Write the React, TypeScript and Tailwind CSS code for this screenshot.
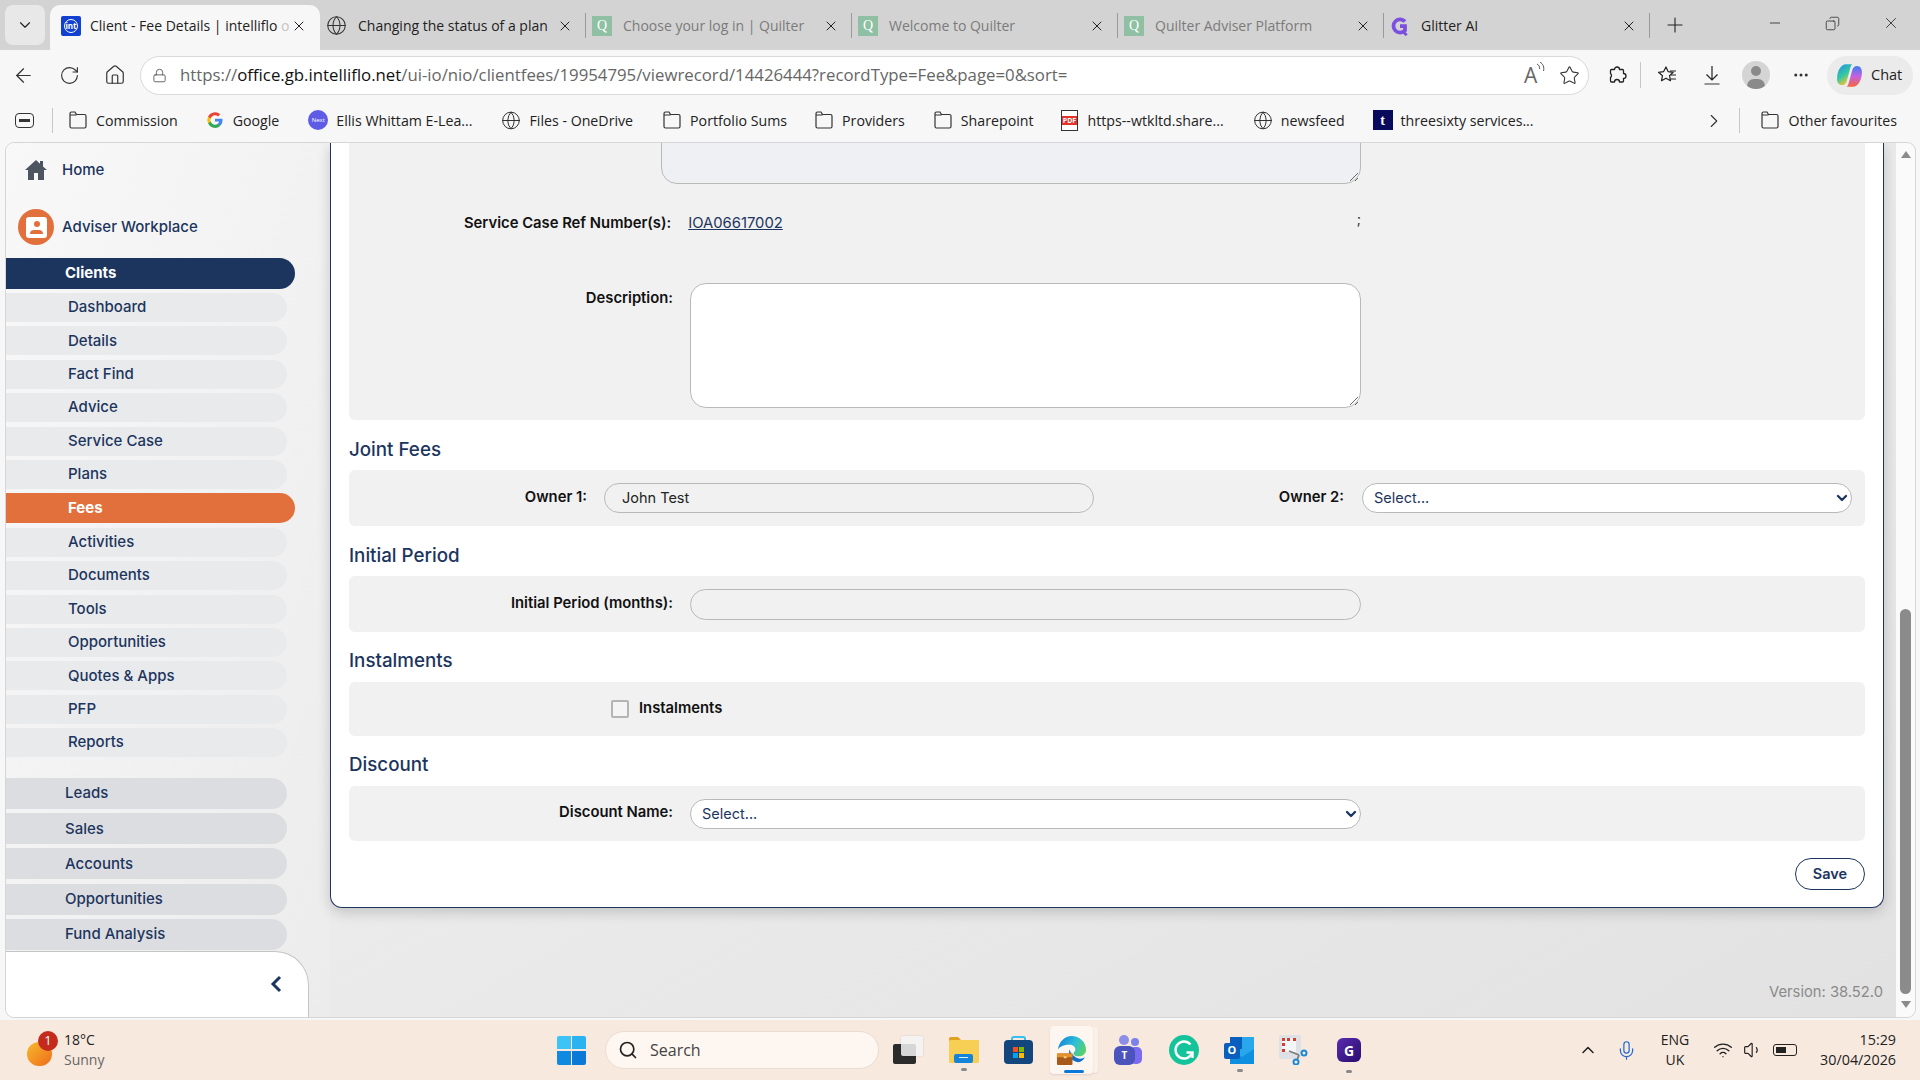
import { ReactNode } from 'react'
import {
  ArrowLeft, ChevronDown, ChevronRight, ChevronUp, Copy, Globe, Home, Lock, Mic, Minus, MoreHorizontal,
  Plus, RotateCw, Search, Star, Volume1, Wifi, X,
} from 'lucide-react'

const sans = 'font-["Open_Sans","Noto_Sans",sans-serif]'

const tabs = [
  { title: 'Changing the status of a plan', icon: 'globe', dim: false },
  { title: 'Choose your log in | Quilter', icon: 'q', dim: true },
  { title: 'Welcome to Quilter', icon: 'q', dim: true },
  { title: 'Quilter Adviser Platform', icon: 'q', dim: true },
  { title: 'Glitter AI', icon: 'g', dim: false },
]

const bookmarks = [
  { label: 'Commission', icon: 'folder', cls: 'ml-[15px]' },
  { label: 'Google', icon: 'google', cls: 'ml-[27px]' },
  { label: 'Ellis Whittam E-Lea...', icon: 'ellis', cls: 'ml-[29px]' },
  { label: 'Files - OneDrive', icon: 'globe', cls: 'ml-[29px]' },
  { label: 'Portfolio Sums', icon: 'folder', cls: 'ml-[29px]' },
  { label: 'Providers', icon: 'folder', cls: 'ml-[27px]' },
  { label: 'Sharepoint', icon: 'folder', cls: 'ml-[28px]' },
  { label: 'https--wtkltd.share...', icon: 'pdf', cls: 'ml-[26px]' },
  { label: 'newsfeed', icon: 'globe', cls: 'ml-[29px]' },
  { label: 'threesixty services...', icon: 't', cls: 'ml-[28px]' },
]

const clientItems = ['Dashboard', 'Details', 'Fact Find', 'Advice', 'Service Case', 'Plans', 'Fees', 'Activities', 'Documents', 'Tools', 'Opportunities', 'Quotes & Apps', 'PFP', 'Reports']
const lowerItems = ['Leads', 'Sales', 'Accounts', 'Opportunities', 'Fund Analysis']

function QIcon() {
  return <span className='flex h-[20px] w-[20px] shrink-0 items-center justify-center bg-[#8fc0a3] font-["Liberation_Serif",serif] text-[14px] text-white'>Q</span>
}

function GlitterG() {
  return (
    <svg width="20" height="20" viewBox="0 0 24 24" fill="none" className="shrink-0">
      <path d="M18 6.500A8 8 0 1 0 18 17.500V12h-6" stroke="#7c4fe0" strokeWidth="4.500" />
      <path d="M15 18l5 5" stroke="#7c4fe0" strokeWidth="3.500" />
    </svg>
  )
}

function GoogleIcon() {
  return (
    <svg width="18" height="18" viewBox="0 0 24 24">
      <path d="M22 12.200c0-.7-.1-1.400-.2-2H12v3.900h5.600a4.800 4.800 0 0 1-2.100 3.100v2.600h3.300c2-1.800 3.200-4.500 3.200-7.600z" fill="#4285f4" />
      <path d="M12 22.500c2.800 0 5.100-.9 6.800-2.500l-3.300-2.600c-.9.6-2.100 1-3.500 1-2.700 0-5-1.800-5.800-4.300H2.800v2.700A10.300 10.300 0 0 0 12 22.500z" fill="#34a853" />
      <path d="M6.200 14.100a6.200 6.200 0 0 1 0-4V7.400H2.800a10.300 10.300 0 0 0 0 9.400z" fill="#fbbc05" />
      <path d="M12 5.800c1.500 0 2.900.5 4 1.600l3-3A10.300 10.300 0 0 0 2.800 7.400l3.400 2.700C7 7.600 9.300 5.800 12 5.800z" fill="#ea4335" />
    </svg>
  )
}

function FolderIcon() {
  return (
    <svg width="20" height="20" viewBox="0 0 20 20" fill="none" stroke="#333" strokeWidth="1.200" className="shrink-0">
      <path d="M2 5V3.500A1.500 1.500 0 0 1 3.500 2H7l1.500 2.500H16.500A1.500 1.500 0 0 1 18 6v10.500a1.500 1.500 0 0 1-1.500 1.500h-13A1.500 1.500 0 0 1 2 16.500V5h6.500" />
    </svg>
  )
}

function BookmarkIcon({ kind }: { kind: string }) {
  if (kind === 'folder') return <FolderIcon />
  if (kind === 'globe') return <Globe size={21} strokeWidth={1.200} className="text-[#333]" />
  if (kind === 'google') return <GoogleIcon />
  if (kind === 'ellis') return <span className="flex h-[20px] w-[20px] items-center justify-center rounded-full bg-[#5e5ce6] text-[6px] text-white">Next</span>
  if (kind === 't') return <span className='flex h-[20px] w-[20px] items-center justify-center bg-[#0a0a5c] font-["Liberation_Serif",serif] text-[14px] font-bold text-white'>t</span>
  return (
    <span className="relative flex h-[21px] w-[17px] flex-col justify-center border border-[#333] bg-white">
      <span className="bg-[#e2342b] text-center text-[7px] font-bold leading-[9px] text-white">PDF</span>
    </span>
  )
}

function Tab({ title, icon, dim }: { title: string; icon: string; dim: boolean }) {
  return (
    <div className="flex h-[45px] w-[266px] shrink-0 items-center pb-[4px] pl-[6px]">
      {icon === 'globe' && <Globe size={21} strokeWidth={1.200} className="shrink-0 text-[#333]" />}
      {icon === 'q' && <QIcon />}
      {icon === 'g' && <GlitterG />}
      <span className={`ml-[11px] flex-1 whitespace-nowrap text-[14px] ${dim ? 'text-[#7b7b7b]' : 'text-[#222]'}`}>{title}</span>
      <X size={16} strokeWidth={1.500} className="shrink-0 text-[#222]" />
      <span className="ml-[12px] h-[25px] w-px shrink-0 bg-[#9a9a9a]" />
    </div>
  )
}

function TabStrip() {
  return (
    <div className="flex h-[50px] items-end bg-[#d3d3d3] pl-[5px]">
      <div className="mb-[5px] flex h-[40px] w-[40px] items-center justify-center rounded-[8px] bg-[#e8e8e8]">
        <ChevronDown size={18} strokeWidth={1.500} className="text-[#222]" />
      </div>
      <div className="ml-[5px] flex h-[45px] w-[270px] shrink-0 items-center rounded-t-[10px] bg-[#f7f7f7] pb-[4px] pl-[11px]">
        <span className="flex h-[20px] w-[20px] items-center justify-center rounded-[2px] bg-[#1240d0]">
          <span className="flex h-[14px] w-[14px] items-center justify-center rounded-full border border-white text-[8px] font-bold text-white">int</span>
        </span>
        <span className="ml-[9px] w-[201px] whitespace-nowrap text-[14px] text-[#222]">Client - Fee Details | intelliflo <span className="text-[#c4c4c4]">o</span></span>
        <X size={16} strokeWidth={1.500} className="text-[#222]" />
      </div>
      <div className="flex">
        {tabs.map(t => <Tab key={t.title} {...t} />)}
      </div>
      <div className="mb-[5px] ml-[13px] flex h-[40px] items-center">
        <Plus size={24} strokeWidth={1.100} className="text-[#222]" />
      </div>
      <div className="mb-[7px] ml-auto flex h-[40px] items-center gap-[42px] pr-[20px] text-[#222]">
        <Minus size={16} strokeWidth={1.200} />
        <Copy size={15} strokeWidth={1.200} className="-scale-x-100" />
        <X size={18} strokeWidth={1.100} />
      </div>
    </div>
  )
}

function ReadAloud() {
  return (
    <span className="relative flex w-[20px] items-center text-[21px] leading-none text-[#666]">
      A
      <svg className="absolute right-[-2px] top-[-3px]" width="10" height="12" viewBox="0 0 10 12" fill="none" stroke="#555" strokeWidth="1">
        <path d="M1 2c2 1 3 3 2.500 5" />
        <path d="M4 0c3 2 4.500 5 3.500 9" />
      </svg>
    </span>
  )
}

function CopilotIcon() {
  return (
    <svg width="27" height="27" viewBox="0 0 24 24" className="shrink-0">
      <defs>
        <linearGradient id="cpA" x1="0" y1="0" x2="0.500" y2="1">
          <stop offset="0" stopColor="#1f8fe8" />
          <stop offset="0.600" stopColor="#36c9a0" />
          <stop offset="1" stopColor="#f7c52c" />
        </linearGradient>
        <linearGradient id="cpB" x1="0.500" y1="0" x2="0.500" y2="1">
          <stop offset="0" stopColor="#3a7ff0" />
          <stop offset="0.500" stopColor="#c560e0" />
          <stop offset="1" stopColor="#f7653c" />
        </linearGradient>
      </defs>
      <path d="M9 2h5.500c-1 1-1.500 2-2 4l-3 11c-.6 2-2 3.500-4 3.500-3.500 0-5-3-4.500-7C1.500 8 4 2 9 2z" fill="url(#cpA)" />
      <path d="M15 22H9.500c1-1 1.500-2 2-4l3-11c.6-2 2-3.500 4-3.500 3.500 0 5 3 4.500 7C22.500 16 20 22 15 22z" fill="url(#cpB)" />
    </svg>
  )
}

function ExtensionIcon() {
  return (
    <svg width="20" height="20" viewBox="0 0 20 20" fill="none" stroke="#222" strokeWidth="1.300" strokeLinejoin="round" className="ml-[18px] shrink-0">
      <path d="M7.500 4.500a2.500 2.500 0 0 1 5 0h3a1 1 0 0 1 1 1v3a2.500 2.500 0 0 1 0 5v2.500a1 1 0 0 1-1 1h-3a2.500 2.500 0 0 0-5 0h-3a1 1 0 0 1-1-1v-3.500a2.500 2.500 0 0 0 0-4V5.500a1 1 0 0 1 1-1z" />
    </svg>
  )
}

function FavouritesIcon() {
  return (
    <svg width="20" height="20" viewBox="0 0 20 20" fill="none" stroke="#222" strokeWidth="1.200" strokeLinejoin="round" className="ml-[16px] shrink-0">
      <path d="M9 2l2.200 4.700 5 .6-3.700 3.400 1 5-4.500-2.500-4.500 2.500 1-5L1.500 7.300l5-.6z" />
      <path d="M13 6h6M14 10h5M13.500 14H19" />
    </svg>
  )
}

function DownloadIcon() {
  return (
    <svg width="16" height="20" viewBox="0 0 16 20" fill="none" stroke="#222" strokeWidth="1.200" className="ml-[27px] shrink-0">
      <path d="M8 1v14M2.500 9.500L8 15l5.500-5.500" />
      <path d="M0.500 19h15" stroke="#555" />
    </svg>
  )
}

function Toolbar() {
  return (
    <div className="flex h-[52px] items-center bg-[#f7f7f7] pb-[2px] text-[#333]">
      <ArrowLeft size={23} strokeWidth={1.300} className="ml-[12px] shrink-0" />
      <RotateCw size={21} strokeWidth={1.300} className="ml-[24px] shrink-0" />
      <Home size={22} strokeWidth={1.300} className="ml-[24px] shrink-0" />
      <div className="ml-[14px] flex h-[39px] w-[1449px] shrink-0 items-center rounded-full border border-[#d9d9d9] bg-white pl-[11px] pr-[8px]">
        <Lock size={15} strokeWidth={1.400} className="shrink-0 text-[#555]" />
        <span className="ml-[13px] flex-1 whitespace-nowrap text-[16.800px] text-[#666]">
          https://<span className="text-[#111]">office.gb.intelliflo.net</span>/ui-io/nio/clientfees/19954795/viewrecord/14426444?recordType=Fee&amp;page=0&amp;sort=
        </span>
        <ReadAloud />
        <Star size={21} strokeWidth={1.200} className="ml-[15px] shrink-0 text-[#333]" />
      </div>
      <ExtensionIcon />
      <span className="ml-[13px] h-[26px] w-px shrink-0 bg-[#c6c6c6]" />
      <FavouritesIcon />
      <DownloadIcon />
      <span className="relative ml-[22px] h-[28px] w-[28px] shrink-0 overflow-hidden rounded-full bg-[#d4d4d4]">
        <span className="absolute left-[9px] top-[5px] h-[10px] w-[10px] rounded-full bg-[#8a8a8a]" />
        <span className="absolute left-[5px] top-[18px] h-[14px] w-[18px] rounded-full bg-[#8a8a8a]" />
      </span>
      <MoreHorizontal size={18} strokeWidth={2} className="ml-[22px] shrink-0" />
      <div className="ml-[17px] flex h-[39px] w-[86px] shrink-0 items-center rounded-full bg-[#ebebeb] pl-[9px]">
        <CopilotIcon />
        <span className="ml-[8px] text-[14.500px] text-[#222]">Chat</span>
      </div>
    </div>
  )
}

function BookmarksBar() {
  return (
    <div className="flex h-[41px] items-center bg-[#f7f7f7] pb-[4px] text-[14.200px] text-[#222]">
      <span className="ml-[15px] flex h-[15px] w-[19px] items-center justify-center rounded-[4px] border-[1.500px] border-[#333]">
        <span className="h-[3px] w-[11px] bg-[#333]" />
      </span>
      <span className="ml-[18px] h-[25px] w-px bg-[#c6c6c6]" />
      {bookmarks.map(b => (
        <div key={b.label} className={`flex items-center gap-[8px] whitespace-nowrap ${b.cls}`}>
          <span className="flex w-[20px] justify-center"><BookmarkIcon kind={b.icon} /></span>
          {b.label}
        </div>
      ))}
      <ChevronRight size={22} strokeWidth={1.200} className="ml-auto text-[#333]" />
      <span className="ml-[14px] h-[25px] w-px bg-[#c6c6c6]" />
      <div className="ml-[20px] mr-[23px] flex items-center gap-[9px] whitespace-nowrap">
        <FolderIcon />
        Other favourites
      </div>
    </div>
  )
}

function Sidebar() {
  return (
    <aside className='flex w-[324px] shrink-0 flex-col bg-gradient-to-br from-[#f8f8f8] to-[#ececec] font-["Inter",sans-serif] text-[15px] font-medium text-[#1c355e]'>
      <div className="flex h-[54px] items-center pl-[19px]">
        <svg width="22" height="20" viewBox="0 0 22 20" fill="#4d5660">
          <path d="M11 0L0 10h3v10h6v-7h4v7h6V10h3l-4-3.600V1h-3v2.700z" />
        </svg>
        <span className="ml-[15px]">Home</span>
      </div>
      <div className="mt-[12px] flex items-center pl-[12px]">
        <span className="flex h-[36px] w-[36px] items-center justify-center rounded-full bg-[#e2703c]">
          <span className="relative h-[21px] w-[21px] rounded-[3px] bg-white">
            <span className="absolute left-[8px] top-[4px] h-[6px] w-[6px] rounded-full bg-[#e2703c]" />
            <span className="absolute bottom-[4px] left-[4px] h-[4px] w-[13px] rounded-t-[4px] bg-[#e2703c]" />
          </span>
        </span>
        <span className="ml-[8px]">Adviser Workplace</span>
      </div>
      <div className="mr-[35px] mt-[13px] flex h-[31px] items-center rounded-r-full bg-[#1c355e] pl-[59px] font-bold text-white">Clients</div>
      <div className="mt-[4px] flex flex-col gap-[4.400px]">
        {clientItems.map(item =>
          item === 'Fees' ? (
            <div key={item} className="mr-[35px] flex h-[30px] items-center rounded-r-full bg-[#e2703c] pl-[62px] font-bold text-white">{item}</div>
          ) : (
            <div key={item} className="mr-[43px] flex h-[29px] items-center rounded-r-full bg-[#e9eaec] pl-[62px]">{item}</div>
          ),
        )}
      </div>
      <div className="mt-[21px] flex flex-col gap-[4.200px]">
        {lowerItems.map(item => (
          <div key={item} className="mr-[43px] flex h-[31px] items-center rounded-r-full bg-[#dcdde0] pl-[59px]">{item}</div>
        ))}
      </div>
      <div className="mr-[21px] mt-[1px] flex flex-1 items-center justify-end rounded-bl-[8px] rounded-tr-[34px] border-r border-t border-[#c4c4c4] bg-white pr-[26px]">
        <svg width="12" height="18" viewBox="0 0 12 18" fill="none" stroke="#1c355e" strokeWidth="3">
          <path d="M10 2L3 9l7 7" />
        </svg>
      </div>
    </aside>
  )
}

function Label({ children, cls }: { children: ReactNode; cls: string }) {
  return <span className={`shrink-0 text-right text-[14.800px] font-semibold text-[#111] ${cls}`}>{children}</span>
}

function Resize() {
  return (
    <svg className="absolute bottom-[1px] right-[1px]" width="10" height="10" viewBox="0 0 10 10" stroke="#666" strokeWidth="1">
      <path d="M1 9l8-8M6 9l3-3" />
    </svg>
  )
}

function SelectBox({ cls }: { cls: string }) {
  return (
    <div className={`flex h-[30px] items-center justify-between rounded-full border border-[#b9b9b9] bg-white pl-[11px] pr-[1px] text-[14.500px] text-[#1c355e] ${cls}`}>
      Select...
      <ChevronDown size={16} strokeWidth={3.500} className="text-[#1c355e]" />
    </div>
  )
}

function Heading({ children, cls }: { children: ReactNode; cls: string }) {
  return <h3 className={`text-[18.750px] font-medium leading-[24px] text-[#1c355e] ${cls}`}>{children}</h3>
}

function Card() {
  return (
    <div className="flex h-[765px] w-[1554px] shrink-0 flex-col overflow-hidden rounded-b-[12px] border border-t-0 border-[#1c355e] bg-white pl-[18px] pr-[18px] shadow-[0_4px_14px_rgba(0,0,0,0.18)]">
      <div className="relative h-[277px] shrink-0 overflow-hidden rounded-b-[6px] bg-[#f1f1f1]">
        <div className="ml-[312px] mt-[-30px] w-[700px] rounded-[16px] border border-[#b9b9b9] bg-[#eff0f4]">
          <div className="relative h-[69px]"><Resize /></div>
        </div>
        <div className="mt-[30px] flex h-[18px] items-center">
          <Label cls="ml-[115px]">Service Case Ref Number(s):</Label>
          <a className="ml-[17px] text-[14.800px] text-[#1c355e] underline">IOA06617002</a>
          <span className="ml-auto mr-[504px] mt-[-9px] text-[14px] leading-none text-[#333]">;</span>
        </div>
        <div className="ml-[10px] mt-[51px] flex">
          <Label cls="mt-[4px] w-[314px]">Description:</Label>
          <div className="relative ml-[17px] h-[125px] w-[671px] rounded-[16px] border border-[#b9b9b9] bg-white"><Resize /></div>
        </div>
      </div>

      <Heading cls="mt-[18px]">Joint Fees</Heading>
      <div className="mt-[8px] flex h-[56px] shrink-0 items-center rounded-[6px] bg-[#f1f1f1]">
        <Label cls="mt-[-2px] w-[238px]">Owner 1:</Label>
        <div className="ml-[17px] flex h-[30px] w-[490px] items-center rounded-full border border-[#b9b9b9] pl-[17px] text-[14.500px] text-[#222]">John Test</div>
        <Label cls="ml-auto mt-[-2px]">Owner 2:</Label>
        <SelectBox cls="ml-[18px] mr-[13px] w-[490px]" />
      </div>

      <Heading cls="mt-[18px]">Initial Period</Heading>
      <div className="mt-[8px] flex h-[56px] shrink-0 items-center rounded-[6px] bg-[#f1f1f1]">
        <Label cls="mt-[-2px] w-[324px]">Initial Period (months):</Label>
        <div className="ml-[17px] h-[31px] w-[671px] rounded-full border border-[#b9b9b9]" />
      </div>

      <Heading cls="mt-[17px]">Instalments</Heading>
      <div className="mt-[9px] flex h-[54px] shrink-0 items-center rounded-[6px] bg-[#f1f1f1] pl-[262px]">
        <span className="h-[18px] w-[18px] rounded-[2px] border-2 border-[#b4b4b4] bg-[#f4f4f4]" />
        <Label cls="ml-[10px] mt-[-2px]">Instalments</Label>
      </div>

      <Heading cls="mt-[17px]">Discount</Heading>
      <div className="mt-[9px] flex h-[55px] shrink-0 items-center rounded-[6px] bg-[#f1f1f1]">
        <Label cls="mt-[-3px] w-[324px]">Discount Name:</Label>
        <SelectBox cls="ml-[17px] w-[671px]" />
      </div>

      <div className="mt-[17px] flex justify-end">
        <button className="flex h-[32px] w-[70px] items-center justify-center rounded-full border border-[#1c355e] text-[14.500px] font-semibold text-[#1c355e]">Save</button>
      </div>
    </div>
  )
}

function Scrollbar() {
  return (
    <div className="flex w-[19px] shrink-0 flex-col items-center rounded-tr-[8px] bg-[#fafafa] pt-[8px]">
      <span className="h-0 w-0 border-x-[5px] border-b-[7px] border-x-transparent border-b-[#8b8b8b]" />
      <div className="mt-[451px] h-[385px] w-[11px] rounded-full bg-[#8b8b8b]" />
      <span className="mt-[7px] h-0 w-0 border-x-[5px] border-t-[7px] border-x-transparent border-t-[#8b8b8b]" />
    </div>
  )
}

function Page() {
  return (
    <div className="ml-[6px] mr-[5px] flex h-[874px] overflow-hidden rounded-[8px] bg-[#ececec] shadow-[0_0_0_1px_#d6d6d6]">
      <Sidebar />
      <main className='flex flex-1 flex-col bg-gradient-to-br from-[#f2f2f2] to-[#e2e2e2] font-["Inter",sans-serif]'>
        <Card />
        <div className="mt-[73px] w-[1553px] text-right text-[14.750px] text-[#8a8a8a]">Version: 38.52.0</div>
      </main>
      <Scrollbar />
    </div>
  )
}

function WinLogo() {
  return (
    <span className="grid h-[29px] w-[29px] grid-cols-2 gap-[1.500px]">
      <span className="rounded-tl-[2px] bg-[#3ec3f7]" />
      <span className="rounded-tr-[2px] bg-[#2bb2f0]" />
      <span className="rounded-bl-[2px] bg-[#0f8ae0]" />
      <span className="rounded-br-[2px] bg-[#0a78d6]" />
    </span>
  )
}

function RunDot({ cls }: { cls: string }) {
  return <span className={`absolute bottom-[-8px] h-[3px] w-[6px] rounded-full bg-[#8a8a8a] ${cls}`} />
}

function TaskbarApps() {
  return (
    <div className="ml-[14px] flex items-center">
      {/* task view */}
      <span className="relative h-[28px] w-[30px]">
        <span className="absolute bottom-0 left-0 h-[20px] w-[23px] rounded-[2px] bg-[#2b2b2b]" />
        <span className="absolute right-0 top-0 h-[20px] w-[22px] rounded-[2px] bg-[#f4f4f4]/85 shadow-[0_0_2px_rgba(0,0,0,0.15)]" />
      </span>
      {/* explorer */}
      <span className="relative ml-[26px] h-[26px] w-[30px]">
        <svg width="30" height="26" viewBox="0 0 30 26">
          <path d="M0 2a2 2 0 0 1 2-2h7l3 3h16a2 2 0 0 1 2 2v4H0z" fill="#dfa11e" />
          <rect x="0" y="3" width="30" height="23" rx="1.500" fill="#f8cf55" />
          <rect x="5" y="17" width="19" height="9" rx="2" fill="#1583d8" />
          <rect x="10" y="20" width="9" height="1" fill="#d9efff" />
        </svg>
        <RunDot cls="left-[12px]" />
      </span>
      {/* store */}
      <span className="relative ml-[25px] h-[28px] w-[29px]">
        <span className="absolute left-[7px] top-0 h-[6px] w-[15px] rounded-t-[3px] border-2 border-b-0 border-[#35c0ef]" />
        <span className="absolute inset-x-0 bottom-0 top-[4px] flex items-center justify-center rounded-[4px] bg-[#14467e]">
          <span className="grid grid-cols-2 gap-[1px]">
            <span className="h-[5px] w-[5px] bg-[#f25022]" /><span className="h-[5px] w-[5px] bg-[#7fba00]" />
            <span className="h-[5px] w-[5px] bg-[#00a4ef]" /><span className="h-[5px] w-[5px] bg-[#ffb900]" />
          </span>
        </span>
      </span>
      {/* edge, active */}
      <span className="relative ml-[17px] flex h-[48px] w-[43px] items-center justify-center rounded-[4px] bg-[#fdf6f0] shadow-[0_1px_2px_rgba(0,0,0,0.1)]">
        <svg width="31" height="31" viewBox="0 0 32 32">
          <defs>
            <linearGradient id="edgeTop" x1="0" y1="0.300" x2="1" y2="0.700">
              <stop offset="0" stopColor="#1686d9" />
              <stop offset="0.550" stopColor="#2fc0d8" />
              <stop offset="1" stopColor="#5ad25e" />
            </linearGradient>
          </defs>
          <path d="M2 15C3 7 9 1 16 1c8 0 15 6 15 14 0 4-3 7-7 7-3 0-6-1-6-3 0-1 2-2 2-4 0-3-3-5-6-5C8 10 4 12 2 15z" fill="url(#edgeTop)" />
          <path d="M14 15c-2 5 2 13 9 13 3 0 5-2 7-5-3 2-8 2-11-1-3-2-4-4-5-7z" fill="#1270c8" />
          <rect x="1" y="19" width="16" height="12" rx="1" fill="#a8591a" />
          <rect x="1" y="19" width="16" height="4" fill="#e2932c" />
          <rect x="8" y="22" width="3" height="2" fill="#f8d27a" />
        </svg>
        <span className="absolute bottom-[1px] left-[14px] h-[3px] w-[20px] rounded-full bg-[#0a78d6]" />
      </span>
      <span className="h-[46px] w-[5px] rounded-r-[4px] bg-[#fbf1ea] shadow-[0_1px_2px_rgba(0,0,0,0.08)]" />
      {/* teams */}
      <span className="relative ml-[16px] h-[30px] w-[28px]">
        <span className="absolute right-[3px] top-[3px] h-[8px] w-[8px] rounded-full bg-[#7b83eb]" />
        <span className="absolute left-[5px] top-0 h-[10px] w-[10px] rounded-full bg-[#8b8fe8]" />
        <span className="absolute bottom-[1px] right-0 h-[17px] w-[12px] rounded-[5px] bg-[#7a6cf0]" />
        <span className="absolute bottom-0 left-0 flex h-[19px] w-[21px] items-center justify-center rounded-[6px] bg-[#4b53bc] text-[10px] font-bold text-white">T</span>
      </span>
      {/* grammarly */}
      <svg width="30" height="30" viewBox="0 0 30 30" fill="none" className="ml-[27px]">
        <circle cx="15" cy="15" r="15" fill="#15c39a" />
        <path d="M21.500 9.500A8.500 8.500 0 1 0 23 18" stroke="#fff" strokeWidth="2.400" />
        <path d="M17.500 17.500H23.500V23" stroke="#fff" strokeWidth="2.400" />
      </svg>
      {/* outlook */}
      <span className="relative ml-[25px] h-[27px] w-[30px]">
        <span className="absolute right-0 top-0 grid h-[15px] w-[24px] grid-cols-2 bg-[#0f6cbd]">
          <span className="bg-[#0a5ebd]" /><span className="bg-[#28a8ea]" />
        </span>
        <svg className="absolute bottom-0 right-0" width="24" height="15" viewBox="0 0 24 15">
          <path d="M0 0l24 0v15H0z" fill="#28a8ea" />
          <path d="M0 0l12 8 12-8v15H0z" fill="#0f8fe0" />
        </svg>
        <span className="absolute left-0 top-[6px] flex h-[16px] w-[16px] items-center justify-center rounded-[2px] bg-[#0a5ebd] text-[11px] font-bold text-white">O</span>
        <RunDot cls="left-[13px]" />
      </span>
      {/* snip */}
      <span className="relative ml-[25px] h-[30px] w-[30px]">
        <span className="absolute left-0 top-0 h-[24px] w-[22px] rounded-[2px] bg-[#dde1e6]" />
        <span className="absolute left-[3px] top-[3px] h-[14px] w-[14px] border-l-[3px] border-t-[3px] border-dotted border-[#d83b2d] bg-[#f4f5f7]" />
        <svg className="absolute bottom-0 right-0" width="22" height="22" viewBox="0 0 22 22" fill="none">
          <path d="M2 8l10 4M12 12l-2 5" stroke="#7d7d7d" strokeWidth="1.800" />
          <circle cx="17" cy="10" r="2.500" stroke="#1b8ad6" strokeWidth="2" />
          <circle cx="9" cy="19" r="2.500" stroke="#1b8ad6" strokeWidth="2" />
        </svg>
      </span>
      {/* glitter */}
      <span className="relative ml-[28px] flex h-[24px] w-[24px] items-center justify-center rounded-[6px] bg-gradient-to-br from-[#5a2bb0] to-[#2a0c6e] text-[14px] font-bold text-white">
        G
        <RunDot cls="left-[9px] bottom-[-11px]" />
      </span>
    </div>
  )
}

function Taskbar() {
  return (
    <div className="mt-[3px] flex h-[60px] items-center bg-[#f8e9df] text-[#222]">
      <span className="relative ml-[27px] mt-[7px] h-[24px] w-[25px] rounded-full bg-gradient-to-br from-[#f4b92c] to-[#ee6a1a]">
        <span className="absolute left-[11px] top-[-11px] flex h-[20px] w-[20px] items-center justify-center rounded-full bg-[#c42b1c] text-[13px] text-white">1</span>
      </span>
      <div className="ml-[12px] flex w-[47px] flex-col text-[14px] leading-[20px]">
        <span>18°C</span>
        <span className="text-[#666]">Sunny</span>
      </div>
      <div className="ml-[446px] flex items-center">
        <WinLogo />
        <div className="ml-[19px] flex h-[38px] w-[274px] items-center rounded-full border border-[#ecdcd0] bg-[#fdf6f1] pl-[12px]">
          <Search size={20} strokeWidth={2} className="text-[#222]" />
          <span className="ml-[12px] text-[16px] text-[#444]">Search</span>
        </div>
        <TaskbarApps />
      </div>
      <ChevronUp size={20} strokeWidth={1.800} className="ml-[217px]" />
      <Mic size={21} strokeWidth={1.400} className="ml-[18px] text-[#2069d1]" />
      <div className="ml-[23px] flex w-[30px] flex-col items-center text-[14px] leading-[20px]">
        <span>ENG</span>
        <span>UK</span>
      </div>
      <Wifi size={20} strokeWidth={1.600} className="ml-[23px]" />
      <Volume1 size={20} strokeWidth={1.400} className="ml-[10px]" />
      <span className="relative ml-[10px] flex h-[12px] w-[24px] items-center rounded-[3px] border-[1.500px] border-[#222] px-[2px]">
        <span className="h-[6px] w-[10px] bg-[#222]" />
      </span>
      <div className="ml-auto mr-[24px] flex flex-col items-end text-[14.300px] leading-[20px]">
        <span>15:29</span>
        <span>30/04/2026</span>
      </div>
    </div>
  )
}

export default function App() {
  return (
    <div className={`flex h-[1080px] w-[1920px] flex-col overflow-hidden bg-[#f7f7f7] ${sans}`}>
      <TabStrip />
      <Toolbar />
      <BookmarksBar />
      <Page />
      <Taskbar />
    </div>
  )
}
